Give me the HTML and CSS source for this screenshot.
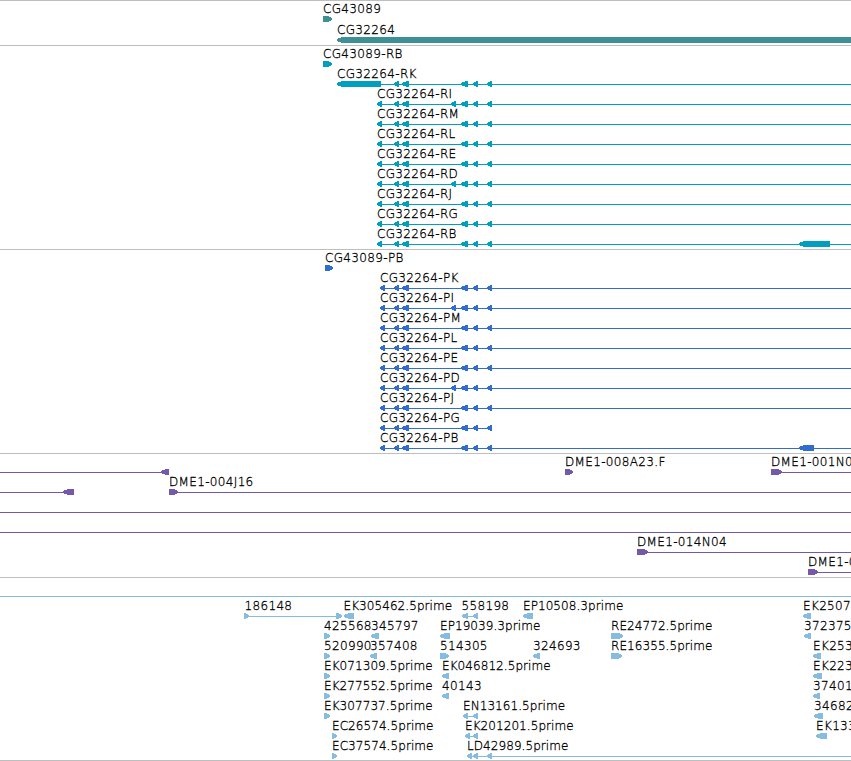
FILE: index.html
```
<!DOCTYPE html>
<html lang="en">
<head>
  <meta charset="UTF-8">
  <meta name="viewport" content="width=device-width, initial-scale=1.0">
  <title>Genome Tracks</title>
  <link rel="stylesheet" href="styles.css">
</head>
<body>
  <main class="browser">
    <section class="track genes" id="genes"></section>
    <section class="track transcripts" id="transcripts"></section>
    <section class="track proteins" id="proteins"></section>
    <section class="track clones" id="clones"></section>
    <section class="track reads" id="reads"></section>
  </main>
  <script src="tracks.js"></script>
</body>
</html>
```
FILE: styles.css
```
body {
  margin: 0;
  background-color: #fff;
  font-family: "DejaVu Sans", sans-serif;
  overflow: hidden;
}
.browser {
  display: flex;
  flex-direction: column;
}
.track {
  display: flex;
  flex-direction: column;
  border-top: 1px solid #bebebe;
  padding-bottom: 3px;
}
.row {
  display: block;
  width: 100%;
  height: 20px;
  fill: currentColor;
  shape-rendering: crispEdges;
}
.label {
  fill: #000;
  stroke: #000;
  stroke-width: 0.3px;
  font-size: 12px;
  font-weight: 200;
  letter-spacing: 0.34px;
}
.label.prime {
  letter-spacing: 0.07px;
}
.genes {
  color: #3e9094;
  padding-bottom: 2px;
}
.genes .row {
  height: 21px;
}
.transcripts {
  color: #009fbf;
}
.proteins {
  color: #306dcf;
}
.clones {
  color: #7658aa;
}
.reads {
  color: #86bcdf;
  padding-bottom: 2px;
  border-bottom: 1px solid #bebebe;
}
```
FILE: tracks.js
```
const END = 851;
const SVG = 'http://www.w3.org/2000/svg';

// Feature: [label, label x, lines [[from, to]], blocks [[from, to, direction]]]
const exons = [[393, 399, '<'], [401, 409, '<'], [460, 468, '<'], [472, 478, '<'], [486, 492, '<']];

function isoform(name, start, options = {}) {
  const blocks = [[start, options.firstEnd || start + 5, '<'], ...exons];
  if (options.extra) blocks.push([450, 456, '<']);
  if (options.last) blocks.push(options.last);
  return [[name, start, [[start + 4, options.end || END]], blocks]];
}

const tracks = {
  genes: [
    [['CG43089', 323, [], [[323, 333, '>']]]],
    [['CG32264', 337, [], [[337, END, '<']]]]
  ],
  transcripts: [
    [['CG43089-RB', 323, [], [[323, 333, '>']]]],
    isoform('CG32264-RK', 337, { firstEnd: 381 }),
    isoform('CG32264-RI', 377, { extra: true }),
    isoform('CG32264-RM', 377),
    isoform('CG32264-RL', 377),
    isoform('CG32264-RE', 377),
    isoform('CG32264-RD', 377, { extra: true }),
    isoform('CG32264-RJ', 377),
    isoform('CG32264-RG', 377),
    isoform('CG32264-RB', 377, { last: [798, 830, '<'] })
  ],
  proteins: [
    [['CG43089-PB', 325, [], [[325, 334, '>']]]],
    isoform('CG32264-PK', 380),
    isoform('CG32264-PI', 380, { extra: true }),
    isoform('CG32264-PM', 380),
    isoform('CG32264-PL', 380),
    isoform('CG32264-PE', 380),
    isoform('CG32264-PD', 380, { extra: true }),
    isoform('CG32264-PJ', 380),
    isoform('CG32264-PG', 380, { end: 490 }),
    isoform('CG32264-PB', 380, { last: [798, 814, '<'] })
  ],
  clones: [
    [
      ['', 0, [[0, 165]], [[160, 169, '<']]],
      ['DME1-008A23.F', 565, [], [[565, 574, '>']]],
      ['DME1-001N0', 771, [[775, END]], [[771, 783, '>']]]
    ],
    [
      ['', 0, [[0, 68]], [[62, 74, '<']]],
      ['DME1-004J16', 169, [[175, END]], [[169, 179, '>']]]
    ],
    [['', 0, [[0, END]], []]],
    [['', 0, [[0, END]], []]],
    [['DME1-014N04', 637, [[642, END]], [[637, 649, '>']]]],
    [['DME1-0', 808, [[812, END]], [[808, 819, '>']]]]
  ],
  reads: [
    [['', 0, [[0, END]], []]],
    [
      ['186148', 244.5, [[248, 340]], [[244, 250, '>'], [336, 343, '>']]],
      ['EK305462.5prime', 343.5, [], [[343, 354, '<']]],
      ['558198', 461.5, [[465, 475]], [[461, 468, '<'], [472, 478, '<']]],
      ['EP10508.3prime', 523, [], [[522, 533, '<']]],
      ['EK2507', 803, [], [[802, 811, '<']]]
    ],
    [
      ['425568', 324, [], [[324, 331, '>']]],
      ['345797', 371, [], [[370, 379, '<']]],
      ['EP19039.3prime', 440, [], [[439, 450, '<']]],
      ['RE24772.5prime', 611, [], [[611, 624, '>']]],
      ['372375', 804, [], [[803, 811, '<']]]
    ],
    [
      ['520990', 324, [], [[324, 331, '>']]],
      ['357408', 370, [], [[369, 377, '<']]],
      ['514305', 440, [], [[440, 450, '>']]],
      ['324693', 533, [], [[532, 540, '<']]],
      ['RE16355.5prime', 611, [], [[611, 623, '>']]],
      ['EK253', 813, [], [[812, 821, '<']]]
    ],
    [
      ['EK071309.5prime', 324, [], [[324, 331, '>']]],
      ['EK046812.5prime', 442, [], [[441, 449, '<']]],
      ['EK223', 813, [], [[812, 822, '<']]]
    ],
    [
      ['EK277552.5prime', 324, [], [[324, 331, '>']]],
      ['40143', 442, [], [[441, 449, '<']]],
      ['37401', 813, [], [[812, 820, '<']]]
    ],
    [
      ['EK307737.5prime', 324, [], [[324, 331, '>']]],
      ['EN13161.5prime', 463, [[467, 475]], [[462, 468, '<'], [472, 478, '<']]],
      ['34682', 814, [], [[813, 823, '<']]]
    ],
    [
      ['EC26574.5prime', 332, [], [[332, 338, '>']]],
      ['EK201201.5prime', 465, [[468, 475]], [[464, 470, '<'], [472, 478, '<']]],
      ['EK133', 816, [], [[815, 827, '<']]]
    ],
    [
      ['EC37574.5prime', 332, [], [[332, 338, '>']]],
      ['LD42989.5prime', 467, [[470, END]], [[466, 472, '<'], [472, 478, '<'], [486, 492, '<']]]
    ]
  ]
};

function add(parent, tag, attrs) {
  const el = document.createElementNS(SVG, tag);
  for (const key in attrs) el.setAttribute(key, attrs[key]);
  parent.appendChild(el);
  return el;
}

// Blocks are 6px tall with a stepped arrow head
function blockPoints(from, to, direction) {
  const left = direction === '<';
  const base = left ? to : from;
  const dir = left ? 1 : -1;
  // Short and medium blocks leave a pixel free before the tip
  const gap = to - from > 5 && to - from < 40 ? 1 : 0;
  const tip = (left ? from : to) + dir * gap;
  const b = tip + dir * 2;
  const c = tip + dir * Math.min(5, to - from - gap - 1);
  return `${tip},17 ${b},16 ${c},15 ${base},15 ${base},21 ${c},21 ${b},20 ${tip},19`;
}

for (const id in tracks) {
  const section = document.getElementById(id);
  for (const features of tracks[id]) {
    const row = add(section, 'svg', { class: 'row', overflow: 'visible' });
    for (const [label, x, lines, blocks] of features) {
      for (const [from, to] of lines) {
        add(row, 'rect', { x: from, y: 18, width: to - from, height: 1 });
      }
      for (const [from, to, direction] of blocks) {
        add(row, 'polygon', { points: blockPoints(from, to, direction) });
      }
      if (label) {
        const name = label.endsWith('prime') ? 'label prime' : 'label';
        add(row, 'text', { class: name, x: x, y: 12 }).textContent = label;
      }
    }
  }
}
```
